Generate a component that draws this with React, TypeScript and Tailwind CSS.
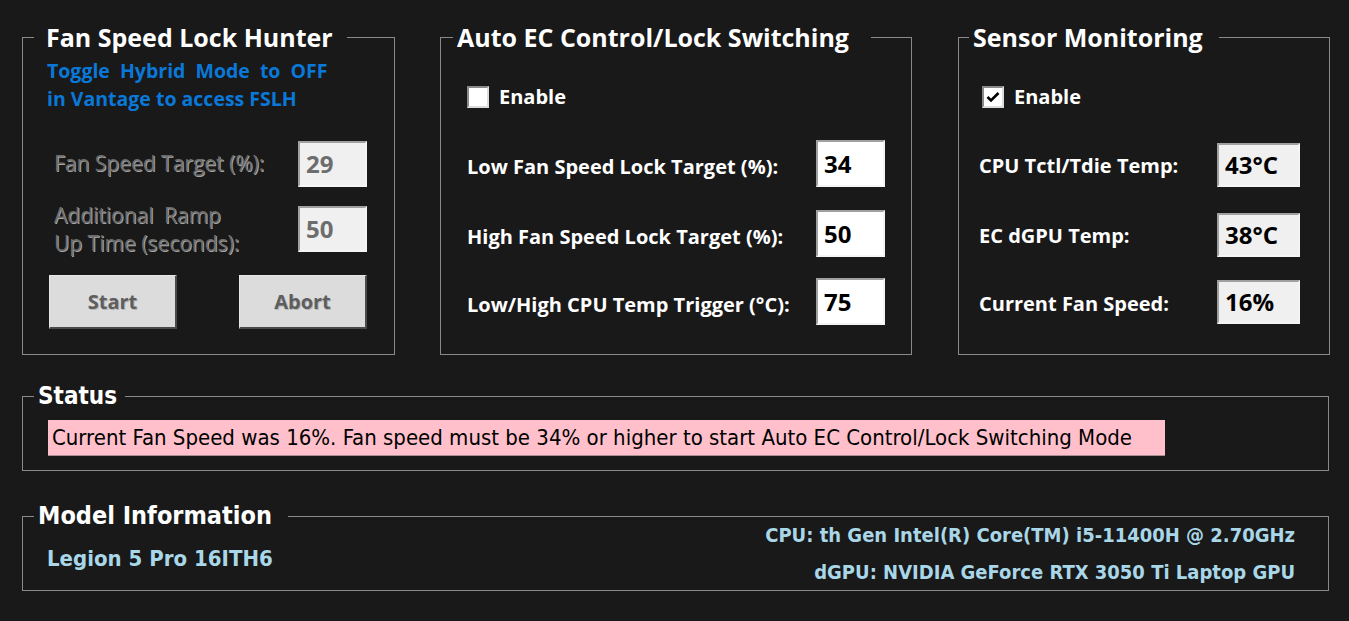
import React from "react";

const UI = "font-['Open_Sans','Noto_Sans',sans-serif]";
const NARROW = "font-['Liberation_Sans_Narrow','DejaVu_Sans_Condensed','Liberation_Sans',sans-serif]";

function Legend({ children, className = "" }: { children: React.ReactNode; className?: string }) {
  return (
    <legend className={`h-[26px] leading-[26px] text-white font-bold whitespace-nowrap ${className}`}>
      {children}
    </legend>
  );
}

function CheckBox({ checked }: { checked?: boolean }) {
  return (
    <div className="w-[22px] h-[22px] bg-white border-2 border-t-[#8a8a8a] border-l-[#8a8a8a] border-b-[#dcdcdc] border-r-[#dcdcdc] flex items-center justify-center">
      {checked && (
        <svg width="14" height="12" viewBox="0 0 14 12">
          <path d="M1.5 6 L5 9.5 L12.5 2" stroke="#000" strokeWidth="2.6" fill="none" />
        </svg>
      )}
    </div>
  );
}

function Box({
  value,
  className = "",
  textClass = "",
}: {
  value: string;
  className?: string;
  textClass?: string;
}) {
  return (
    <div
      className={`border-2 border-t-[#a0a0a0] border-l-[#a0a0a0] border-b-[#f4f4f4] border-r-[#f4f4f4] flex items-center pl-[6px] font-bold text-[24px] ${UI} ${className} ${textClass}`}
    >
      {value}
    </div>
  );
}

function DisabledText({ children, className = "" }: { children: React.ReactNode; className?: string }) {
  return (
    <div className={`text-[#6b6b6b] [text-shadow:1px_1px_0_#a5a5a5] ${className}`}>{children}</div>
  );
}

function Btn({ label }: { label: string }) {
  return (
    <div className="w-[128px] h-[54px] bg-[#dcdcdc] border-t border-l border-t-[#e6e6e6] border-l-[#e6e6e6] border-b-2 border-r-2 border-b-[#4a4a4a] border-r-[#4a4a4a] flex items-center justify-center">
      <span className="text-[#5e5e5e] font-bold text-[20px] [text-shadow:1px_1px_0_#b5b5b5]">{label}</span>
    </div>
  );
}

export default function App() {
  return (
    <div className={`w-[1349px] h-[621px] bg-[#191919] overflow-hidden pt-[24px] pl-[22px] ${UI}`}>
      {/* Row 1 */}
      <div className="flex items-start">
        {/* Fan Speed Lock Hunter */}
        <fieldset className="w-[373px] h-[331px] border border-[#8a8a8a]">
          <Legend className="ml-[11px] pl-[12px] pr-[14px] text-[25px]">Fan Speed Lock Hunter</Legend>
          <div className="pl-[24px] pr-[27px]">
            <div className="mt-[7px] text-[#0a78d8] font-bold text-[19.5px] leading-[28px]">
              <div className="[word-spacing:5px]">Toggle Hybrid Mode to OFF</div>
              <div>in Vantage to access FSLH</div>
            </div>
            <div className="mt-[28px] flex items-center justify-between">
              <DisabledText className="ml-[7px] text-[21px]">Fan Speed Target (%):</DisabledText>
              <Box value="29" className="w-[69px] h-[46px] bg-[#f0f0f0]" textClass="text-[#6d6d6d]" />
            </div>
            <div className="mt-[14px] flex items-center justify-between">
              <DisabledText className="ml-[7px] text-[21px] leading-[28px]">
                <div className="[word-spacing:5px]">Additional Ramp</div>
                <div>Up Time (seconds):</div>
              </DisabledText>
              <Box value="50" className="w-[69px] h-[46px] bg-[#f0f0f0]" textClass="text-[#6d6d6d]" />
            </div>
            <div className="mt-[18px] flex items-center justify-between ml-[2px]">
              <Btn label="Start" />
              <Btn label="Abort" />
            </div>
          </div>
        </fieldset>

        {/* Auto EC */}
        <fieldset className="ml-[45px] w-[472px] h-[331px] border border-[#8a8a8a]">
          <Legend className="ml-[12px] pl-[4px] pr-[22px] text-[25px]">Auto EC Control/Lock Switching</Legend>
          <div className="pl-[26px] pr-[26px]">
            <div className="mt-[32px] flex items-center gap-[10px]">
              <CheckBox />
              <span className="text-white font-bold text-[20px]">Enable</span>
            </div>
            <div className="mt-[28px] flex items-center justify-between">
              <span className="text-white font-bold text-[20px] mt-[6px]">Low Fan Speed Lock Target (%):</span>
              <Box value="34" className="w-[69px] h-[47px] bg-white" textClass="text-black" />
            </div>
            <div className="mt-[23px] flex items-center justify-between">
              <span className="text-white font-bold text-[20px] mt-[6px]">High Fan Speed Lock Target (%):</span>
              <Box value="50" className="w-[69px] h-[47px] bg-white" textClass="text-black" />
            </div>
            <div className="mt-[21px] flex items-center justify-between">
              <span className="text-white font-bold text-[20px] mt-[6px]">Low/High CPU Temp Trigger (°C):</span>
              <Box value="75" className="w-[69px] h-[47px] bg-white" textClass="text-black" />
            </div>
          </div>
        </fieldset>

        {/* Sensor Monitoring */}
        <fieldset className="ml-[46px] w-[372px] h-[331px] border border-[#8a8a8a]">
          <Legend className="ml-[10px] pl-[4px] pr-[16px] text-[25px]">Sensor Monitoring</Legend>
          <div className="pl-[20px] pr-[29px]">
            <div className="mt-[32px] flex items-center gap-[10px] ml-[3px]">
              <CheckBox checked />
              <span className="text-white font-bold text-[20px]">Enable</span>
            </div>
            <div className="mt-[31px] flex items-center justify-between">
              <span className="text-white font-bold text-[20px] mt-[2px]">CPU Tctl/Tdie Temp:</span>
              <Box value="43°C" className="w-[83px] h-[44px] bg-[#f0f0f0]" textClass="text-black" />
            </div>
            <div className="mt-[26px] flex items-center justify-between">
              <span className="text-white font-bold text-[20px] mt-[2px]">EC dGPU Temp:</span>
              <Box value="38°C" className="w-[83px] h-[44px] bg-[#f0f0f0]" textClass="text-black" />
            </div>
            <div className="mt-[23px] flex items-center justify-between">
              <span className="text-white font-bold text-[20px] mt-[4px]">Current Fan Speed:</span>
              <Box value="16%" className="w-[83px] h-[44px] bg-[#f0f0f0]" textClass="text-black" />
            </div>
          </div>
        </fieldset>
      </div>

      {/* Status */}
      <fieldset className="mt-[28px] w-[1307px] h-[88px] border border-[#8a8a8a]">
        <Legend className={`ml-[11px] pl-[4px] pr-[8px] text-[24px] ${NARROW}`}>Status</Legend>
        <div className="pl-[25px]">
          <div className="mt-[11px] w-[1117px] h-[36px] bg-[#ffc0cb] border-b border-b-[#a88e92] flex items-center pl-[4px]">
            <span className={`text-black text-[22px] ${NARROW}`}>
              Current Fan Speed was 16%. Fan speed must be 34% or higher to start Auto EC Control/Lock Switching Mode
            </span>
          </div>
        </div>
      </fieldset>

      {/* Model Information */}
      <fieldset className="mt-[32px] w-[1307px] h-[88px] border border-[#8a8a8a]">
        <Legend className={`ml-[11px] pl-[4px] pr-[16px] text-[25px] ${NARROW}`}>Model Information</Legend>
        <div className="pl-[24px] pr-[33px] flex items-start justify-between">
          <div className={`mt-[13px] text-[#a9d7e8] font-bold text-[22px] ${NARROW}`}>Legion 5 Pro 16ITH6</div>
          <div className={`text-[#a9d7e8] font-bold text-[20px] text-right leading-[37px] -mt-[12px] ${NARROW}`}>
            <div>CPU: th Gen Intel(R) Core(TM) i5-11400H @ 2.70GHz</div>
            <div>dGPU: NVIDIA GeForce RTX 3050 Ti Laptop GPU</div>
          </div>
        </div>
      </fieldset>
    </div>
  );
}
